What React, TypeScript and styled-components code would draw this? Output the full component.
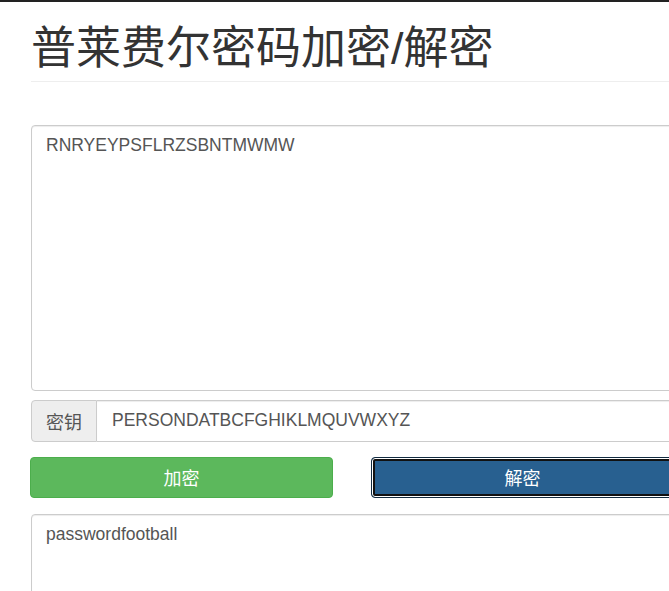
import React from "react";
import styled, { createGlobalStyle } from "styled-components";

const Global = createGlobalStyle`
  html, body { margin: 0; padding: 0; background: #fff; }
  body {
    overflow: hidden;
    font-family: "Liberation Sans", "Noto Sans CJK SC", Arial, sans-serif;
    color: #333;
  }
  * { box-sizing: border-box; }
`;

const TopBar = styled.div`
  height: 2px;
  background: #222;
`;

const Container = styled.div`
  width: 700px;
  padding-left: 31px;
`;

const PageHeader = styled.div`
  margin-top: 22px;
  padding-bottom: 7px;
  border-bottom: 1px solid #eee;
`;

const Title = styled.h1`
  margin: 0;
  font-family: "Liberation Sans", "Noto Sans CJK SC", sans-serif;
  font-size: 45px;
  font-weight: 400;
  line-height: 1.1;
  color: #333;
`;

const Form = styled.div`
  width: 644px;
  margin-top: 43px;
  display: flex;
  flex-direction: column;
`;

const TextArea = styled.textarea<{ $mt?: number }>`
  display: block;
  width: 100%;
  height: 266px;
  margin: ${(p) => p.$mt ?? 0}px 0 0 0;
  padding: 8px 14px;
  border: 1px solid #ccc;
  border-radius: 4px;
  box-shadow: inset 0 1px 1px rgba(0, 0, 0, 0.075);
  font-family: "Liberation Sans", "Noto Sans CJK SC", sans-serif;
  font-size: 17.5px;
  line-height: 1.35;
  color: #555;
  resize: none;
  outline: none;
`;

const InputGroup = styled.div`
  display: flex;
  height: 42px;
  margin-top: 9px;
`;

const Addon = styled.span`
  display: flex;
  align-items: center;
  justify-content: center;
  width: 66px;
  background: #eee;
  border: 1px solid #ccc;
  border-radius: 4px 0 0 4px;
  font-size: 18px;
  color: #555;
  font-family: "Noto Sans CJK SC", sans-serif;
`;

const KeyInput = styled.input`
  flex: 1;
  height: 100%;
  padding: 0 15px;
  border: 1px solid #ccc;
  border-left: 0;
  border-radius: 0 4px 4px 0;
  box-shadow: inset 0 1px 1px rgba(0, 0, 0, 0.075);
  font-family: "Liberation Sans", sans-serif;
  font-size: 17.5px;
  color: #555;
  outline: none;
`;

const ButtonRow = styled.div`
  display: grid;
  grid-template-columns: 303px 303px;
  column-gap: 38px;
  margin-top: 15px;
  margin-left: -1px;
`;

const Button = styled.button<{ $variant: "success" | "primary" }>`
  height: 41px;
  border-radius: 4px;
  font-family: "Noto Sans CJK SC", sans-serif;
  font-size: 18px;
  color: #fff;
  cursor: pointer;
  outline: none;
  background: ${(p) => (p.$variant === "success" ? "#5cb85c" : "#286090")};
  border: 1px solid ${(p) => (p.$variant === "success" ? "#4cae4c" : "#122b40")};
  box-shadow: ${(p) =>
    p.$variant === "primary"
      ? "inset 0 0 0 1px #fff, inset 0 0 0 3px #111"
      : "none"};
`;

export default function App() {
  return (
    <>
      <Global />
      <TopBar />
      <Container>
        <PageHeader>
          <Title>普莱费尔密码加密/解密</Title>
        </PageHeader>
        <Form>
          <TextArea defaultValue="RNRYEYPSFLRZSBNTMWMW" />
          <InputGroup>
            <Addon>密钥</Addon>
            <KeyInput defaultValue="PERSONDATBCFGHIKLMQUVWXYZ" />
          </InputGroup>
          <ButtonRow>
            <Button $variant="success">加密</Button>
            <Button $variant="primary">解密</Button>
          </ButtonRow>
          <TextArea $mt={16} defaultValue="passwordfootball" />
        </Form>
      </Container>
    </>
  );
}
